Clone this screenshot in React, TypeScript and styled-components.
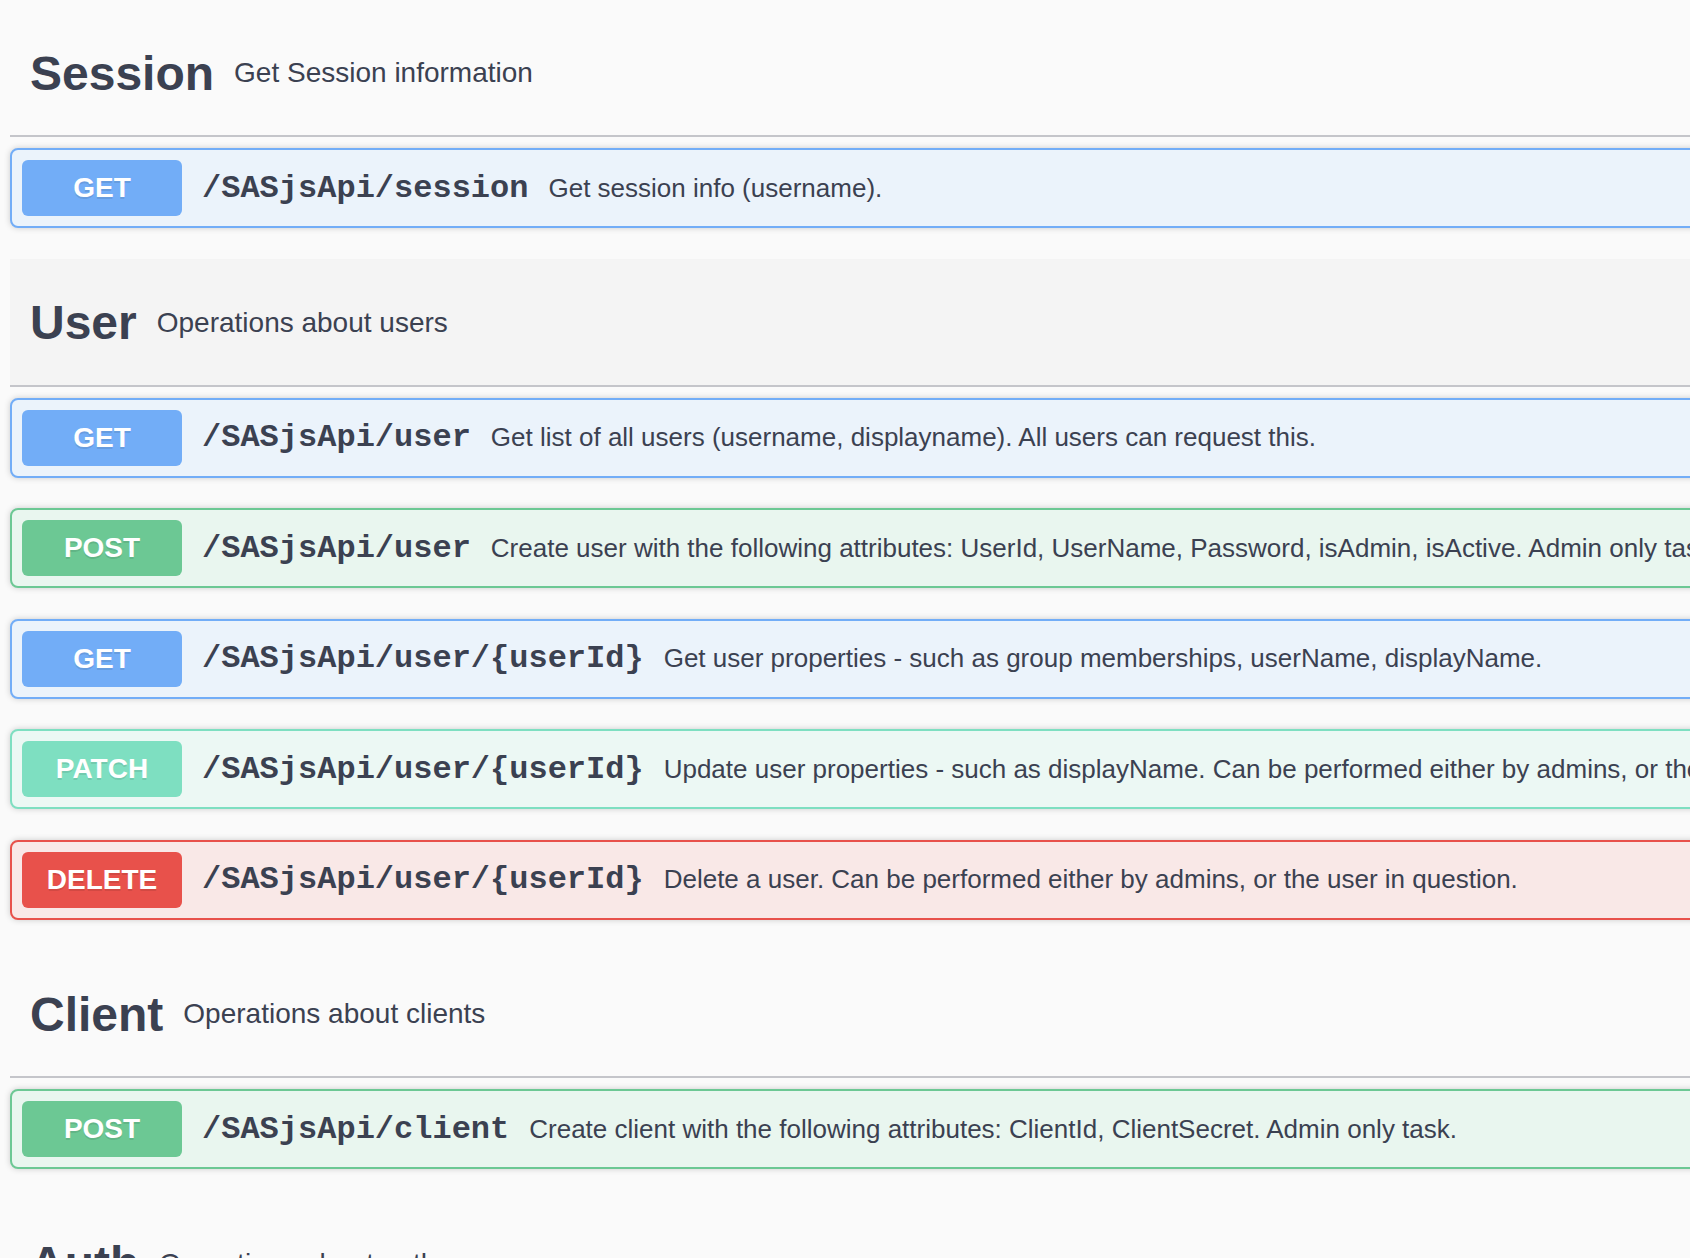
import { createGlobalStyle } from 'styled-components';
import styled from 'styled-components';

type Method = 'GET' | 'POST' | 'PATCH' | 'DELETE';

const methodColors: Record<Method, { main: string; bg: string }> = {
  GET: { main: '#72adf7', bg: '#ebf3fb' },
  POST: { main: '#6cc894', bg: '#e9f6ef' },
  PATCH: { main: '#7edfc1', bg: '#ecf8f4' },
  DELETE: { main: '#e8514b', bg: '#f9e8e7' },
};

const GlobalStyle = createGlobalStyle`
  html, body {
    margin: 0;
    padding: 0;
    background: #fafafa;
    overflow: hidden;
  }
  body {
    font-family: "Liberation Sans", Arial, sans-serif;
    color: #3b4151;
  }
`;

const Wrapper = styled.div`
  width: 2400px;
  padding: 9px 0 0 10px;
  box-sizing: border-box;
`;

const TagSection = styled.section`
  display: flex;
  flex-direction: column;
`;

const TagHeading = styled.h3<{ $hover?: boolean }>`
  display: flex;
  align-items: center;
  box-sizing: border-box;
  height: 128px;
  margin: 0 0 11px;
  padding: 2px 40px 0 20px;
  border-bottom: 2px solid #c4c5ca;
  background: ${({ $hover }) => ($hover ? '#f4f4f4' : 'transparent')};
  font-size: 48px;
  font-weight: 700;
  color: #3b4151;
`;

const TagDescription = styled.small`
  padding: 0 20px;
  font-size: 28px;
  font-weight: 400;
`;

const OpBlock = styled.div<{ $method: Method }>`
  margin: 0 0 30.5px;
  border: 2px solid ${({ $method }) => methodColors[$method].main};
  border-radius: 8px;
  background: ${({ $method }) => methodColors[$method].bg};
  box-shadow: 0 0 6px rgba(0, 0, 0, 0.19);
`;

const Summary = styled.div`
  display: flex;
  align-items: center;
  padding: 10px;
`;

const MethodBadge = styled.span<{ $method: Method }>`
  min-width: 160px;
  padding: 12px 0;
  line-height: 32px;
  border-radius: 6px;
  background: ${({ $method }) => methodColors[$method].main};
  color: #fff;
  font-size: 28px;
  font-weight: 700;
  text-align: center;
  text-shadow: 0 2px 0 rgba(0, 0, 0, 0.1);
`;

const Path = styled.span`
  padding: 0 20px;
  font-family: "Liberation Mono", "Courier New", monospace;
  font-size: 32px;
  font-weight: 700;
  color: #3b4151;
  white-space: nowrap;
`;

const Description = styled.span`
  font-size: 26px;
  color: #3b4151;
  white-space: nowrap;
`;

type Op = { method: Method; path: string; desc: string };
type Tag = { name: string; desc: string; hover?: boolean; ops: Op[] };

const tags: Tag[] = [
  {
    name: 'Session',
    desc: 'Get Session information',
    ops: [{ method: 'GET', path: '/SASjsApi/session', desc: 'Get session info (username).' }],
  },
  {
    name: 'User',
    desc: 'Operations about users',
    hover: true,
    ops: [
      {
        method: 'GET',
        path: '/SASjsApi/user',
        desc: 'Get list of all users (username, displayname). All users can request this.',
      },
      {
        method: 'POST',
        path: '/SASjsApi/user',
        desc: 'Create user with the following attributes: UserId, UserName, Password, isAdmin, isActive. Admin only task.',
      },
      {
        method: 'GET',
        path: '/SASjsApi/user/{userId}',
        desc: 'Get user properties - such as group memberships, userName, displayName.',
      },
      {
        method: 'PATCH',
        path: '/SASjsApi/user/{userId}',
        desc: 'Update user properties - such as displayName. Can be performed either by admins, or the user in question.',
      },
      {
        method: 'DELETE',
        path: '/SASjsApi/user/{userId}',
        desc: 'Delete a user. Can be performed either by admins, or the user in question.',
      },
    ],
  },
  {
    name: 'Client',
    desc: 'Operations about clients',
    ops: [
      {
        method: 'POST',
        path: '/SASjsApi/client',
        desc: 'Create client with the following attributes: ClientId, ClientSecret. Admin only task.',
      },
    ],
  },
  {
    name: 'Auth',
    desc: 'Operations about auth',
    ops: [],
  },
];

export default function App() {
  return (
    <>
      <GlobalStyle />
      <Wrapper>
        {tags.map((tag) => (
          <TagSection key={tag.name}>
            <TagHeading $hover={tag.hover}>
              <span>{tag.name}</span>
              <TagDescription>{tag.desc}</TagDescription>
            </TagHeading>
            {tag.ops.map((op, i) => (
              <OpBlock key={i} $method={op.method}>
                <Summary>
                  <MethodBadge $method={op.method}>{op.method}</MethodBadge>
                  <Path>{op.path}</Path>
                  <Description>{op.desc}</Description>
                </Summary>
              </OpBlock>
            ))}
          </TagSection>
        ))}
      </Wrapper>
    </>
  );
}
